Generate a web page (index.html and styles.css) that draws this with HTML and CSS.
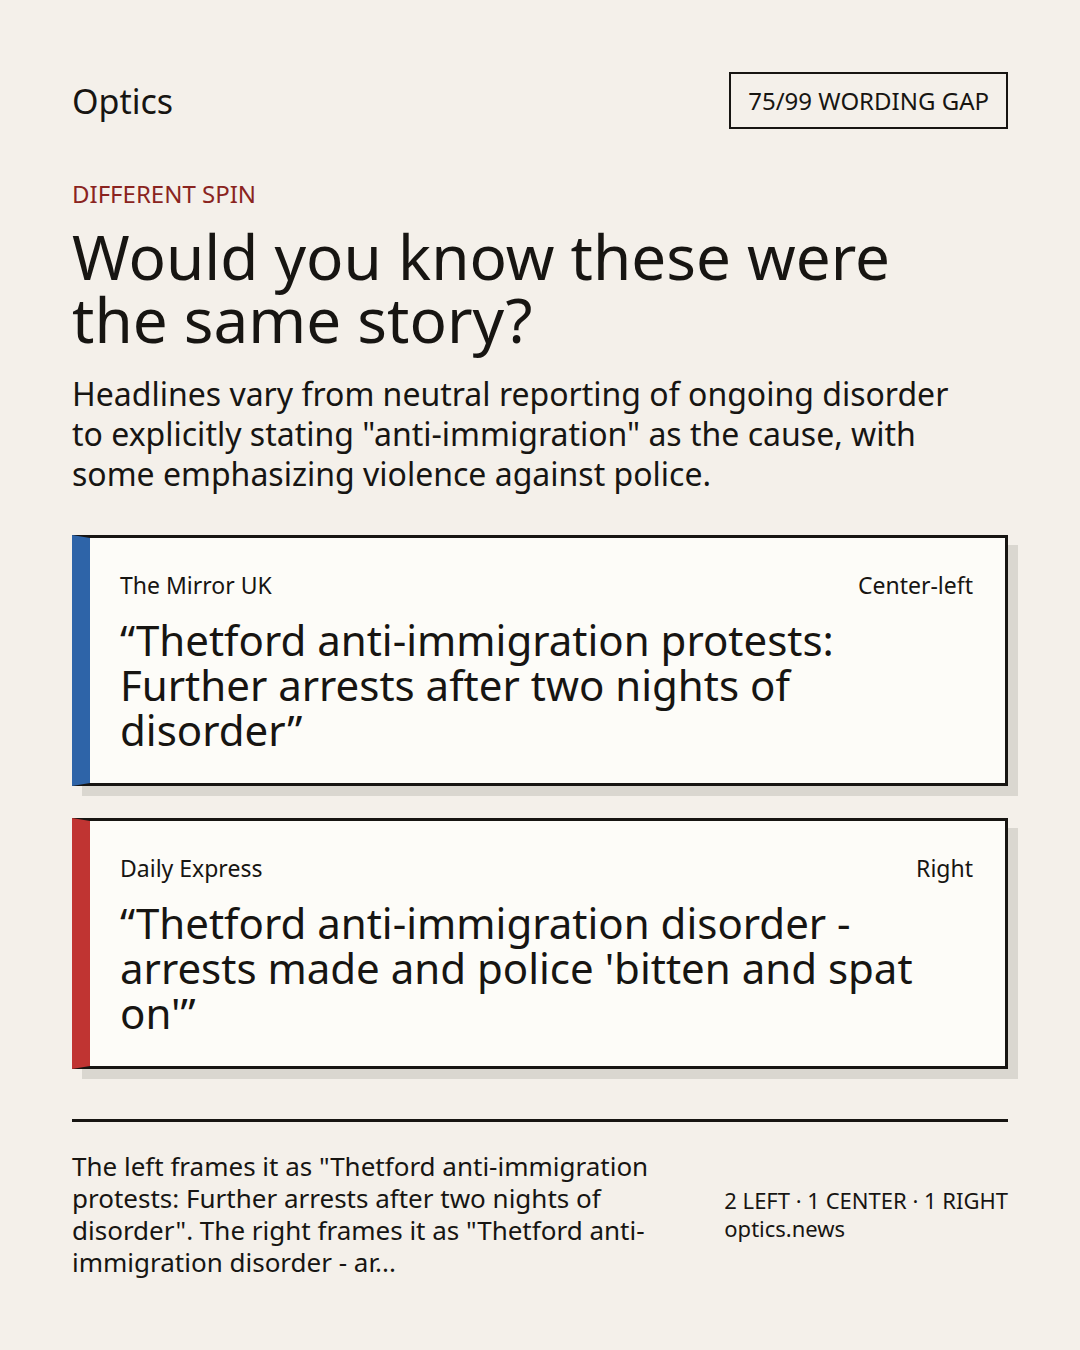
FILE: index.html
```html
<!DOCTYPE html>
<html lang="en">
<head>
<meta charset="utf-8">
<title>Optics — Different Spin</title>
<link rel="stylesheet" href="styles.css">
</head>
<body>
<main class="page">
  <header class="top">
    <div class="brand">Optics</div>
    <div class="badge">75/99 WORDING GAP</div>
  </header>

  <div class="eyebrow">DIFFERENT SPIN</div>
  <h1 class="title">Would you know these were the same story?</h1>
  <p class="lede">Headlines vary from neutral reporting of ongoing disorder to explicitly stating "anti-immigration" as the cause, with some emphasizing violence against police.</p>

  <section class="cards">
    <article class="card card-left">
      <div class="card-meta">
        <span class="source">The Mirror UK</span>
        <span class="lean">Center-left</span>
      </div>
      <p class="quote">“Thetford anti-immigration protests: Further arrests after two nights of disorder”</p>
    </article>
    <article class="card card-right">
      <div class="card-meta">
        <span class="source">Daily Express</span>
        <span class="lean">Right</span>
      </div>
      <p class="quote">“Thetford anti-immigration disorder - arrests made and police 'bitten and spat on'”</p>
    </article>
  </section>

  <footer class="foot">
    <p class="summary">The left frames it as "Thetford anti-immigration protests: Further arrests after two nights of disorder". The right frames it as "Thetford anti-immigration disorder - ar...</p>
    <div class="stats">
      <div>2 LEFT · 1 CENTER · 1 RIGHT</div>
      <div>optics.news</div>
    </div>
  </footer>
</main>
</body>
</html>
```

FILE: styles.css
```css
* { box-sizing: border-box; }

html, body {
  margin: 0;
  padding: 0;
}

body {
  background: #f4f0ea;
  color: #171512;
  font-family: "Noto Sans", "Open Sans", sans-serif;
  width: 1080px;
  height: 1350px;
  overflow: hidden;
}

.page {
  padding: 72px 72px 0 72px;
}

.top {
  display: flex;
  justify-content: space-between;
  align-items: center;
}

.brand {
  font-size: 34px;
  line-height: 42px;
}

.badge {
  border: 2px solid #171512;
  font-size: 24px;
  line-height: 32px;
  padding: 11px 17px 10px;
}

.eyebrow {
  margin-top: 49px;
  font-size: 24px;
  line-height: 32px;
  color: #8a2420;
}

.title {
  margin: 15px 0 0;
  font-weight: 400;
  font-size: 62px;
  line-height: 63px;
  max-width: 880px;
}

.lede {
  margin: 23px 0 0;
  font-size: 32px;
  line-height: 40px;
  max-width: 890px;
}

.cards {
  margin-top: 41px;
  display: flex;
  flex-direction: column;
  gap: 32px;
}

.card {
  background: #fdfcf8;
  border: 3px solid #171512;
  border-left-width: 18px;
  box-shadow: 10px 10px 0 #dad7d0;
  padding: 32px 32px 31px 30px;
}

.card-left { border-left-color: #2e64a8; }
.card-right { border-left-color: #c03432; }

.card-meta {
  display: flex;
  justify-content: space-between;
  font-size: 23px;
  line-height: 30px;
}

.quote {
  margin: 17px 0 0;
  font-size: 42px;
  line-height: 45px;
}

.foot {
  margin-top: 50px;
  border-top: 3px solid #171512;
  padding-top: 28px;
  display: flex;
  justify-content: space-between;
  align-items: center;
}

.summary {
  margin: 0;
  width: 600px;
  font-size: 26px;
  line-height: 32px;
}

.stats {
  font-size: 22px;
  line-height: 28px;
}
```
